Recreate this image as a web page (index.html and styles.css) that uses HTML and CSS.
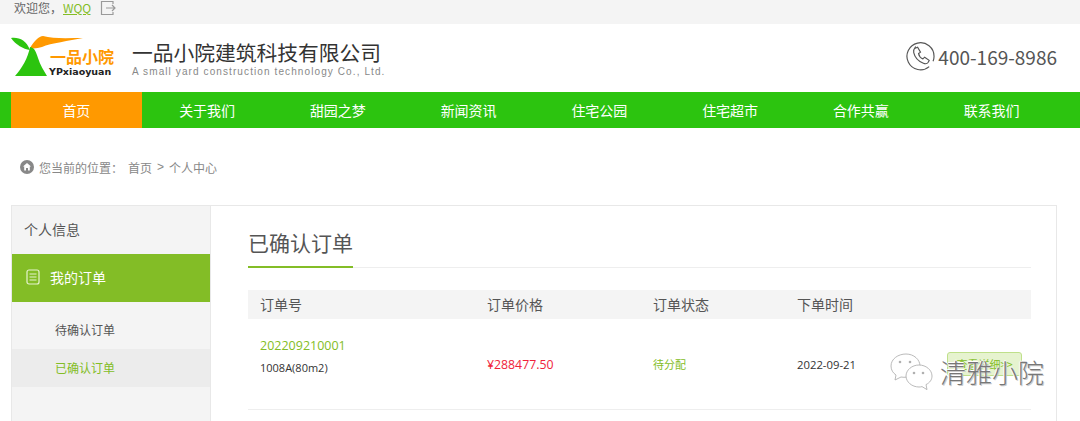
FILE: index.html
```html
<!DOCTYPE html>
<html lang="zh-CN">
<head>
  <meta charset="UTF-8">
  <title>个人中心</title>
  <link rel="stylesheet" href="styles.css">
</head>
<body>
  <div class="topbar">
    <span>欢迎您，</span><a class="user" href="#">WQQ</a>
    <svg class="logout" width="16" height="16" viewBox="0 0 16 16" fill="none" stroke="#9a9a9a" stroke-width="1.2">
      <path d="M13 4V1.500H1.500v13H13V12"/>
      <path d="M6 8h9M12 5l3 3-3 3"/>
    </svg>
  </div>

  <header class="header">
    <div class="brand">
      <div class="logo">
        <svg class="logo-mark" width="72" height="42" viewBox="0 0 72 42">
          <path d="M0 2c8-1 15 2 19 12C12 13 5 9 0 2z" fill="#2cc40f"/>
          <path d="M19 12C23 5 28 0 32 0c10 3 25 2 40 2-14 3-32 5-41 9-4 1-8 2-12 1z" fill="#f90"/>
          <path d="M19 11c5 1 6 5 8 11 2 7 6 13 9 18H4c7-8 13-18 15-29z" fill="#2cc40f"/>
        </svg>
        <span class="logo-cn">一品小院</span>
        <span class="logo-en">YPxiaoyuan</span>
      </div>
      <div class="company">
        <div class="company-cn">一品小院建筑科技有限公司</div>
        <div class="company-en">A small yard construction technology Co., Ltd.</div>
      </div>
    </div>
    <div class="phone">
      <svg width="29" height="29" viewBox="0 0 30 30" fill="none" stroke="#555" stroke-width="1.2">
        <path d="M24 25.500A14 14 0 1 1 29 15c0 2-.4 3.500-1 5"/>
        <path d="M9.500 6.500l2.500-1 3 5-2 1.500c.5 2.500 2 4.500 4.500 5.500l1.800-1.800 4.700 3.300-1 2c-1 1.500-3 1.800-5 1-5-2-9-6.500-10-11-.4-2 .2-4 1.500-5.500z"/>
      </svg>
      <span>400-169-8986</span>
    </div>
  </header>

  <nav class="nav">
    <a class="active" href="#">首页</a>
    <a href="#">关于我们</a>
    <a href="#">甜园之梦</a>
    <a href="#">新闻资讯</a>
    <a href="#">住宅公园</a>
    <a href="#">住宅超市</a>
    <a href="#">合作共赢</a>
    <a href="#">联系我们</a>
  </nav>

  <div class="crumbs">
    <svg width="14" height="14" viewBox="0 0 14 14">
      <circle cx="7" cy="7" r="7" fill="#888"/>
      <path d="M7 3l4 3.600h-1.200V10.500H8V8H6v2.500H4.200V6.600H3z" fill="#fff"/>
    </svg>
    <span>您当前的位置：</span>
    <span>首页</span>
    <span class="crumb-sep">&gt;</span>
    <span>个人中心</span>
  </div>

  <main class="panel">
    <aside class="side">
      <div class="side-title">个人信息</div>
      <div class="side-head">
        <svg width="14" height="16" viewBox="0 0 14 16" fill="none" stroke="#e6f3cf" stroke-width="1.2">
          <rect x="1" y="1" width="12" height="14" rx="2"/>
          <path d="M3.500 5h7M3.500 8h7M3.500 11h7"/>
        </svg>
        <span>我的订单</span>
      </div>
      <ul class="side-list">
        <li>待确认订单</li>
        <li class="current">已确认订单</li>
      </ul>
    </aside>

    <section class="content">
      <div class="title-row"><h2>已确认订单</h2></div>
      <div class="order-head order-cols">
        <span>订单号</span>
        <span>订单价格</span>
        <span>订单状态</span>
        <span>下单时间</span>
      </div>
      <div class="order-row order-cols">
        <div class="order-info">
          <div class="order-no">202209210001</div>
          <div class="order-item">1008A(80m2)</div>
        </div>
        <div class="price">¥288477.50</div>
        <div class="status">待分配</div>
        <div class="date">2022-09-21</div>
        <a class="detail" href="#">查看详细&gt;&gt;</a>
      </div>
    </section>
  </main>

  <div class="watermark">
    <svg width="43" height="38" viewBox="0 0 43 38" fill="#fff" stroke="#a8a8a8" stroke-width="0.8">
      <path d="M16 1C8 1 1 6 1 13c0 4 2 7 5 9l-1 5 6-3c1 .2 2 .3 3 .3 8 0 16-5 16-11.300S24 1 16 1z"/>
      <path d="M29 12c-7 0-13 5-13 11s6 11 13 11c1 0 2-.1 3-.4l5 3-1-5c4-2 6-5 6-8.600 0-6-6-11-13-11z"/>
      <g fill="#b0b0b0" stroke="none">
        <circle cx="10" cy="9" r="1.300"/><circle cx="20" cy="9" r="1.300"/>
        <circle cx="24" cy="20" r="1.300"/><circle cx="33" cy="20" r="1.300"/>
      </g>
    </svg>
    <span>清雅小院</span>
  </div>
</body>
</html>
```
FILE: styles.css
```css
* {
  box-sizing: border-box;
}
html, body {
  margin: 0;
  height: 421px;
  overflow: hidden;
}
body {
  position: relative;
  background: #fff;
  color: #555;
  font-family: "Noto Sans CJK SC", "Open Sans", sans-serif;
  font-size: 12px;
}
a {
  text-decoration: none;
}

.topbar {
  display: flex;
  align-items: center;
  height: 24px;
  padding: 0 0 8px 14px;
  background: #f4f4f4;
  color: #666;
  line-height: 16px;
}
.topbar .user {
  margin-left: 1px;
  color: #83bd26;
  text-decoration: underline;
}
.logout {
  margin-left: 9px;
}

.header {
  display: flex;
  justify-content: space-between;
  align-items: center;
  height: 68px;
  padding: 0 23px 0 11px;
}
.brand {
  display: flex;
  align-items: center;
}
.logo {
  position: relative;
  width: 107px;
  height: 44px;
}
.logo-mark {
  position: absolute;
  left: 0;
  top: 0;
}
.logo-cn {
  position: absolute;
  left: 39px;
  top: 11px;
  color: #f90;
  font-size: 16px;
  font-weight: 700;
  line-height: 18px;
}
.logo-en {
  position: absolute;
  left: 38px;
  top: 30px;
  color: #222;
  font-family: "DejaVu Sans", sans-serif;
  font-size: 9.500px;
  font-weight: 700;
  line-height: 12px;
}
.company {
  margin: 2px 0 0 14px;
}
.company-cn {
  color: #333;
  font-size: 20.750px;
  line-height: 26px;
}
.company-en {
  color: #888;
  font-family: "Liberation Sans", sans-serif;
  font-size: 10px;
  letter-spacing: 1.1px;
  line-height: 14px;
}
.phone {
  display: flex;
  align-items: center;
  gap: 3px;
  margin-bottom: 3px;
  color: #555;
  font-size: 19px;
}

.nav {
  display: flex;
  height: 36px;
  padding-left: 11px;
  background: #2cc40f;
}
.nav a {
  flex: 0 0 130.750px;
  color: #fff;
  font-size: 14px;
  line-height: 36px;
  text-align: center;
}
.nav .active {
  background: #f90;
}

.crumbs {
  display: flex;
  align-items: center;
  gap: 5px;
  height: 20px;
  margin: 29px 0 28px 20px;
  color: #888;
}
.crumb-sep {
  font-family: "Liberation Sans", sans-serif;
}

.panel {
  display: flex;
  height: 216px;
  margin: 0 23px 0 11px;
  border: 1px solid #e8e8e8;
  border-bottom: none;
}
.side {
  width: 199px;
  background: #f4f4f4;
  border-right: 1px solid #e8e8e8;
}
.side-title {
  height: 48px;
  padding-left: 12px;
  color: #555;
  font-size: 14px;
  line-height: 46px;
}
.side-head {
  display: flex;
  align-items: center;
  gap: 10px;
  height: 48px;
  padding: 0 0 2px 14px;
  background: #83bd26;
  color: #fff;
  font-size: 14px;
}
.side-list {
  margin: 0;
  padding: 9px 0 0;
  list-style: none;
}
.side-list li {
  height: 38px;
  padding-left: 43px;
  color: #555;
  line-height: 38px;
}
.side-list .current {
  background: #ececec;
  color: #83bd26;
}

.content {
  flex: 1;
  padding: 0 25px 0 37px;
}
.title-row {
  height: 62px;
  border-bottom: 1px solid #eee;
}
.title-row h2 {
  display: inline-block;
  height: 62px;
  margin: 0;
  border-bottom: 2px solid #83bd26;
  color: #555;
  font-size: 21px;
  font-weight: 400;
  line-height: 73px;
}
.order-cols {
  display: grid;
  grid-template-columns: 227px 166px 144px 150px 1fr;
  padding-left: 12px;
  align-items: center;
}
.order-head {
  height: 29px;
  margin-top: 22px;
  padding-bottom: 1px;
  background: #f4f4f4;
  color: #555;
  font-size: 14px;
}
.order-row {
  height: 91px;
  border-bottom: 1px solid #eee;
}
.order-info {
  padding-bottom: 17px;
}
.order-no {
  color: #83bd26;
  font-family: "Open Sans", sans-serif;
  font-size: 12.500px;
  line-height: 20px;
}
.order-item {
  margin-top: 4px;
  color: #333;
  font-family: "Open Sans", sans-serif;
  font-size: 11px;
  line-height: 16px;
}
.price {
  color: #f0223a;
  font-family: "Open Sans", sans-serif;
  font-size: 12.300px;
}
.status {
  color: #83bd26;
  font-size: 11px;
}
.date {
  color: #333;
  font-family: "Open Sans", sans-serif;
  font-size: 11.300px;
}
.detail {
  width: 75px;
  height: 24px;
  background: #e6f3cf;
  border: 1px solid #bfe08a;
  border-radius: 3px;
  color: #83bd26;
  font-size: 11px;
  line-height: 22px;
  text-align: center;
}

.watermark {
  position: absolute;
  left: 890px;
  top: 353px;
  display: flex;
  align-items: center;
  gap: 7px;
  color: #777;
  font-size: 26px;
  font-weight: 300;
  line-height: 38px;
  text-shadow: 1px 1px 0 #ccc, -1px 0 0 #fff, 0 -1px 0 #fff;
}
```
